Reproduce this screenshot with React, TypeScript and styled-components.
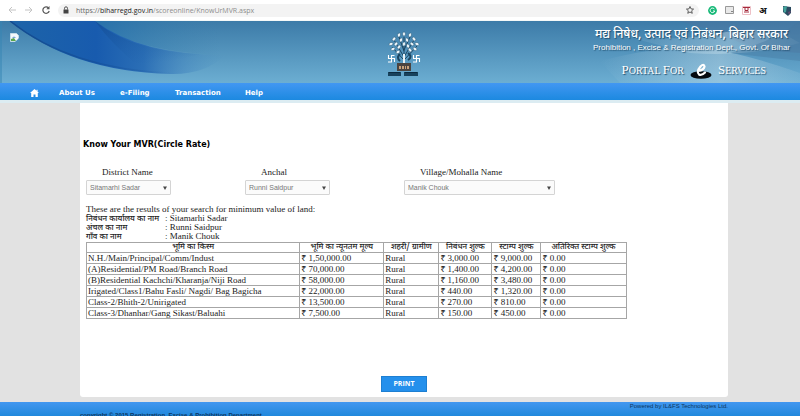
import React from "react";
import styled, { createGlobalStyle } from "styled-components";

const sans = `"Liberation Sans", Arial, sans-serif`;
const serif = `"Liberation Serif", "Noto Sans Devanagari", "Noto Sans", serif`;
const verdana = `"DejaVu Sans", Verdana, sans-serif`;
const hindi = `"Noto Sans Devanagari", "Noto Sans", sans-serif`;

const GlobalStyle = createGlobalStyle`
  * { box-sizing: border-box; }
  body { margin: 0; background: #fff; font-family: ${serif}; font-size: 9px; color: #222; }
`;

const Page = styled.div`
  display: flex;
  flex-direction: column;
  min-height: 100vh;
  padding-bottom: 4px;
`;

/* Browser toolbar */
const Toolbar = styled.div`
  display: flex;
  align-items: center;
  height: 21px;
  padding: 0 8px;
  border-bottom: 1px solid #f4f8f8;
  background: #fff;
`;

const NavIcons = styled.div`
  display: flex;
  gap: 9px;
  width: 50px;
`;

const AddressBar = styled.div`
  display: flex;
  align-items: center;
  flex: 1;
  height: 13px;
  padding: 0 5px;
  border-radius: 7px;
  background: #f3f3f3;
`;

const Url = styled.span`
  flex: 1;
  margin-left: 7px;
  padding-top: 2px;
  font: 7px/12px "Open Sans", sans-serif;
  color: #8d8d8d;
  white-space: nowrap;
  b { font-weight: 400; color: #222; }
  i { font-style: normal; color: #666; }
`;

const Extensions = styled.div`
  display: flex;
  align-items: center;
  gap: 8px;
  margin-left: 9px;
`;

const Letter = styled.span`
  width: 15px;
  padding-top: 4px;
  font: 700 9px/14px ${hindi};
  color: #111;
`;

/* Site banner */
const Banner = styled.header`
  position: relative;
  display: flex;
  justify-content: space-between;
  height: 62px;
  padding: 6px 10px 0 10px;
  background: linear-gradient(#3c7ba8, #6caed2);
  overflow: hidden;
`;

const Art = styled.svg<{ $side: "left" | "right" }>`
  position: absolute;
  top: 0;
  ${(p) => p.$side}: 0;
`;

const BannerSide = styled.div`
  position: relative;
  flex: 1 1 0;
  min-width: 0;
  padding-top: 6px;
`;

const BannerCentre = styled.div`
  position: relative;
  padding: 4px 0 0 7px;
`;

const Titles = styled(BannerSide)`
  display: flex;
  flex-direction: column;
  align-items: flex-end;
  padding-top: 0;
  color: #fff;
  white-space: nowrap;
  text-shadow: 1px 1px 1px #23506f;
`;

const HindiTitle = styled.div`
  font: 500 12px/16px ${hindi};
  padding-right: 2px;
`;

const EnglishTitle = styled.div`
  font: 8px/9px ${sans};
`;

const Portal = styled.div`
  display: flex;
  align-items: center;
  gap: 5px;
  margin-top: 7px;
  padding-right: 24px;
  font: 10px/22px "Liberation Serif", serif;
  b { font-size: 13px; font-weight: 400; }
`;

/* Menu */
const Menu = styled.nav`
  display: flex;
  align-items: center;
  height: 17px;
  padding: 2px 0 0 30px;
  background: linear-gradient(#4297f2, #1c89e0);
`;

const MenuLink = styled.a<{ $width: number }>`
  width: ${(p) => p.$width}px;
  font: 700 7px/12px ${verdana};
  color: #fff;
  text-decoration: none;
  svg { display: block; }
`;

/* Body */
const Body = styled.main`
  flex: 1;
  padding: 0 9% 5px 10%;
  border-top: 3px solid #dcecf2;
  background: #e2e2e2;
`;

const Panel = styled.section`
  min-height: 294px;
  padding: 34px 6px 0 6px;
  background: #fff;
  border-radius: 0 0 3px 3px;
`;

const Heading = styled.h1`
  margin: 0 0 14px -3px;
  font: 700 8px/16px ${verdana};
  color: #000;
`;

const Filters = styled.form`
  display: grid;
  grid-template-columns: 159px 159px 151px;
`;

const FilterLabel = styled.label`
  display: block;
  padding-left: 16px;
  line-height: 10px;
`;

const SelectBox = styled.div<{ $wide?: boolean }>`
  position: relative;
  width: ${(p) => (p.$wide ? 151 : 85)}px;
  margin-top: 3px;
  svg { position: absolute; right: 4px; top: 6px; pointer-events: none; }
`;

const Select = styled.select`
  display: block;
  appearance: none;
  width: 100%;
  height: 15px;
  padding: 0 3px;
  border: 1px solid #d4d4d4;
  border-radius: 1px;
  background: #fbfbfb;
  font: 7px/12px ${sans};
  color: #777;
`;

const Intro = styled.p`
  margin: 9px 0 0;
  line-height: 10px;
`;

const Details = styled.dl`
  display: grid;
  grid-template-columns: 79px auto;
  grid-auto-rows: 9px;
  margin: 0 0 1px;
  line-height: 9px;
  dt { font: 500 8px/11px ${hindi}; white-space: nowrap; }
  dd { margin: 0; }
`;

const RateTable = styled.table`
  width: 85%;
  table-layout: fixed;
  border-collapse: collapse;
  line-height: 10px;
  white-space: nowrap;
  th, td { height: 11px; padding: 0 0 0 1px; border: 1px solid #a6a6a6; text-align: left; }
  th { height: 10px; padding: 0; font: 500 8px/9px ${hindi}; text-align: center; }
`;

const Actions = styled.div`
  display: flex;
  justify-content: center;
  margin-top: 57px;
`;

const PrintButton = styled.button`
  width: 46px;
  height: 16px;
  padding: 0;
  border: 1px solid #1d7fd2;
  background: #2490ec;
  color: #fff;
  font: 700 7px/14px "Open Sans", sans-serif;
`;

const Footer = styled.footer`
  display: flex;
  justify-content: space-between;
  height: 14px;
  padding: 0 9% 0 10%;
  overflow: hidden;
  background: linear-gradient(#4297f0, #2088dc);
  font: 6px/8px ${sans};
  color: #0c3560;
`;

const Copyright = styled.strong`
  padding-top: 9px;
  white-space: nowrap;
`;

const rows = [
  ["N.H./Main/Principal/Comm/Indust", "1,50,000.00", "3,000.00", "9,000.00"],
  ["(A)Residential/PM Road/Branch Road", "70,000.00", "1,400.00", "4,200.00"],
  ["(B)Residential Kachchi/Kharanja/Niji Road", "58,000.00", "1,160.00", "3,480.00"],
  ["Irigated/Class1/Bahu Fasli/ Nagdi/ Bag Bagicha", "22,000.00", "440.00", "1,320.00"],
  ["Class-2/Bhith-2/Unirigated", "13,500.00", "270.00", "810.00"],
  ["Class-3/Dhanhar/Gang Sikast/Baluahi", "7,500.00", "150.00", "450.00"],
];

const columns: [string, number][] = [
  ["भूमि का किस्म", 213],
  ["भूमि का न्यूनतम मूल्य", 84],
  ["शहरी/ ग्रामीण", 55],
  ["निबंधन शुल्क", 53],
  ["स्टाम्प शुल्क", 49],
  ["अतिरिक्त स्टाम्प शुल्क", 85],
];
const columnTotal = columns.reduce((sum, c) => sum + c[1], 0);

const Col = styled.col<{ $share: number }>`
  width: ${(p) => p.$share}%;
`;

function Emblem() {
  const leaves = [
    [8, 8, 40], [13, 4, 20], [18, 3, 0], [24, 4, 20], [28, 8, -40], [5, 13, 70], [10, 13, 40], [15, 9, 20],
    [21, 9, -20], [26, 13, -50], [31, 13, -70], [7, 18, 70], [13, 16, 40], [22, 15, -20], [29, 18, -60], [18, 13, 10], [24, 19, -40], [12, 21, 60],
  ];
  return (
    <svg width="36" height="48" viewBox="0 0 36 48" role="img" aria-label="Government of Bihar emblem">
      <g fill="none" stroke="#1c4560" strokeWidth="1">
        <path d="M18 32V6M18 26L8 9M18 26L28 9M17 28L6 16M19 28L31 15M18 20L13 6M18 19L24 6" />
        <path d="M14 23q-4 4 0 7M22 22q5 4 0 7" strokeWidth="2" />
      </g>
      <path d="M17 33V23h2v10z" fill="#e8f2f6" />
      {leaves.map(([x, y, r], i) => (
        <ellipse key={i} cx={x} cy={y} rx="1.4" ry="2.1" fill="#f4fbff" stroke="#2c5b78" strokeWidth=".5" transform={`rotate(${r} ${x} ${y})`} />
      ))}
      <g fill="none" stroke="#fff" strokeWidth="1.1">
        <path d="M2.500 24v3.500h6V31M8.500 24.500h-3V31h-3.500" />
        <path d="M27.500 24v3.500h6V31M33.500 24.500h-3V31H27" />
      </g>
      <path d="M11 32h14v8H11z" fill="#4b4440" />
      <path d="M13 35h2v3h-2zM16 35h2v3h-2zM19 35h1v3h-1zM21 35h2v3h-2z" fill="#c9a27c" />
      <path d="M2 41h13v4H2zM18 41h14v4H18z" fill="#17415c" />
      <path d="M3 41.500h11M19 41.500h12" stroke="#0b2a40" />
    </svg>
  );
}

function Filter({ id, label, value, wide }: { id: string; label: string; value: string; wide?: boolean }) {
  return (
    <div>
      <FilterLabel htmlFor={id}>{label}</FilterLabel>
      <SelectBox $wide={wide}>
        <Select id={id} defaultValue={value}>
          <option>{value}</option>
        </Select>
        <svg width="4" height="4" viewBox="0 0 4 4"><path d="M0 .5h4L2 4z" fill="#444" /></svg>
      </SelectBox>
    </div>
  );
}

export default function App() {
  return (
    <Page>
      <GlobalStyle />
      <Toolbar>
        <NavIcons>
          <svg width="8" height="8" viewBox="0 0 8 8" fill="none" stroke="#c4c4c4"><path d="M8 4H1M4 1L1 4l3 3" /></svg>
          <svg width="8" height="8" viewBox="0 0 8 8" fill="none" stroke="#c4c4c4"><path d="M0 4h7M4 1l3 3-3 3" /></svg>
          <svg width="8" height="8" viewBox="0 0 8 8" fill="none" stroke="#555" strokeWidth="1.2"><path d="M6.500 2A3.200 3.200 0 1 0 7.200 5" /><path d="M7.500 0v3.200H4.300z" fill="#555" stroke="none" /></svg>
        </NavIcons>
        <AddressBar>
          <svg width="6" height="8" viewBox="0 0 6 8"><path d="M.5 3.500h5V7.500h-5z" fill="#444" /><path d="M1.500 3.500V2.300a1.500 1.500 0 0 1 3 0v1.200" fill="none" stroke="#444" strokeWidth=".9" /></svg>
          <Url><i>https://</i><b>biharregd.gov.in</b>/scoreonline/KnowUrMVR.aspx</Url>
          <svg width="8" height="8" viewBox="0 0 16 16" fill="none" stroke="#444" strokeWidth="1.700"><path d="M8 1l2.100 4.800 5 .4-3.800 3.400 1.200 5L8 12l-4.500 2.600 1.200-5L.9 6.200l5-.4z" /></svg>
        </AddressBar>
        <Extensions>
          <svg width="9" height="9" viewBox="0 0 9 9"><circle cx="4.500" cy="4.500" r="4.400" fill="#17b978" /><path d="M6.500 3.200A2.300 2.300 0 1 0 6.700 5H5" fill="none" stroke="#fff" /></svg>
          <svg width="9" height="8" viewBox="0 0 9 8"><path d="M.5.500h8v7h-8z" fill="#e9e9e9" stroke="#999" /><path d="M6 5.500h2" stroke="#888" /></svg>
          <svg width="9" height="9" viewBox="0 0 9 9"><path d="M.5.500h8v8h-8z" fill="#fff" stroke="#edc0c6" /><path d="M1 1.500h7M3 2v2.500h3V2M2 6h5" fill="none" stroke="#a52a3c" /></svg>
          <Letter>अ</Letter>
          <svg width="10" height="11" viewBox="0 0 10 11"><path d="M1 1l8 1v6L6 11 1 7z" fill="#2b4a60" /><path d="M1 2l4-1-1 6-2 1z" fill="#43a29a" /><path d="M6 7l3-1-2 4z" fill="#6b4a72" /></svg>
        </Extensions>
      </Toolbar>

      <Banner>
        <Art $side="left" width="300" height="62" viewBox="0 0 300 62">
          <defs>
            <linearGradient id="band" x1="0" x2="1">
              <stop offset="0" stopColor="#1d64a8" />
              <stop offset=".4" stopColor="#185bae" />
              <stop offset=".62" stopColor="#2569b4" stopOpacity=".9" />
              <stop offset=".82" stopColor="#3a7dbc" stopOpacity=".4" />
              <stop offset="1" stopColor="#4a8fc0" stopOpacity="0" />
            </linearGradient>
            <linearGradient id="glow" x1="0" x2="1">
              <stop offset="0" stopColor="#1f6dab" stopOpacity=".7" />
              <stop offset="1" stopColor="#3a7fae" stopOpacity="0" />
            </linearGradient>
            <linearGradient id="edge" x1="0" x2="1">
              <stop offset="0" stopColor="#124a90" />
              <stop offset="1" stopColor="#124a90" stopOpacity="0" />
            </linearGradient>
            <linearGradient id="shade" x1="0" y1="0" x2=".3" y2="1">
              <stop offset="0" stopColor="#124a90" stopOpacity=".8" />
              <stop offset="1" stopColor="#1d5faa" stopOpacity="0" />
            </linearGradient>
          </defs>
          <path d="M95 0Q130 30 220 34L220 0z" fill="url(#glow)" />
          <path d="M10 0Q70 50 170 53Q205 54 225 34Q140 34 95 0z" fill="url(#band)" />
          <path d="M95 0Q130 30 200 33Q160 44 140 46Q112 24 95 0z" fill="url(#shade)" opacity=".8" />
          <path d="M10 0Q70 48 170 52" fill="none" stroke="url(#edge)" strokeWidth="1.500" />
          <path d="M0 0h2v62H0z" fill="#3585b4" opacity=".5" />
        </Art>
        <Art $side="right" width="240" height="62" viewBox="0 0 240 62">
          <defs>
            <linearGradient id="mist" x1="0" x2="1">
              <stop offset="0" stopColor="#cfe4ee" stopOpacity="0" />
              <stop offset=".6" stopColor="#cfe4ee" stopOpacity=".4" />
              <stop offset="1" stopColor="#cfe4ee" stopOpacity=".1" />
            </linearGradient>
          </defs>
          <path d="M120 0h120v32Q190 30 160 12z" fill="#52749a" opacity=".35" />
          <path d="M40 40Q110 22 150 28T240 52V62H60z" fill="url(#mist)" />
          <path d="M60 14Q110 22 160 12T240 22Q190 36 130 32z" fill="url(#mist)" />
          <path d="M170 32Q210 22 240 0V40z" fill="#47799f" opacity=".4" />
        </Art>
        <BannerSide>
          <svg width="9" height="9" viewBox="0 0 9 9" role="img" aria-label="Logo"><path d="M.5.500h6l2 2v6h-8z" fill="#f4f9fc" stroke="#c6dbe8" /><path d="M2 5q2-3 4 0z" fill="#7ca7d8" /><path d="M1 8V6l3-1 2 3z" fill="#59a54e" /><path d="M9 5L5 9h4z" fill="#4a8fbc" /></svg>
        </BannerSide>
        <BannerCentre><Emblem /></BannerCentre>
        <Titles>
          <HindiTitle>मद्य निषेध, उत्पाद एवं निबंधन, बिहार सरकार</HindiTitle>
          <EnglishTitle>Prohibition , Excise &amp; Registration Dept., Govt. Of Bihar</EnglishTitle>
          <Portal>
            <span><b>P</b>ORTAL <b>F</b>OR</span>
            <svg width="24" height="18" viewBox="0 0 24 18" role="img" aria-label="e">
              <ellipse cx="12" cy="13" rx="10.500" ry="3.800" fill="#050a10" />
              <path d="M9 9Q15 8 15.500 4.500Q15 1 11.500 4.500Q7 10 10 12.500Q12.500 14 16 10.500" fill="none" stroke="#fff" strokeWidth="2.200" strokeLinecap="round" />
            </svg>
            <span><b>S</b>ERVICES</span>
          </Portal>
        </Titles>
      </Banner>

      <Menu>
        <MenuLink href="#home" aria-label="Home" $width={29}>
          <svg width="9" height="8" viewBox="0 0 9 8"><path d="M4.500 0L0 4h1.200v4h2.300V5.500h2V8h2.300V4H9L7.600 2.700V.8h-1v1z" fill="#fff" /></svg>
        </MenuLink>
        <MenuLink href="#about" $width={61}>About Us</MenuLink>
        <MenuLink href="#filing" $width={55}>e-Filing</MenuLink>
        <MenuLink href="#transaction" $width={70}>Transaction</MenuLink>
        <MenuLink href="#help" $width={30}>Help</MenuLink>
      </Menu>

      <Body>
        <Panel>
          <Heading>Know Your MVR(Circle Rate)</Heading>
          <Filters>
            <Filter id="district" label="District Name" value="Sitamarhi Sadar" />
            <Filter id="anchal" label="Anchal" value="Runni Saidpur" />
            <Filter id="village" label="Village/Mohalla Name" value="Manik Chouk" wide />
          </Filters>
          <Intro>These are the results of your search for minimum value of land:</Intro>
          <Details>
            <dt>निबंधन कार्यालय का नाम</dt><dd>: Sitamarhi Sadar</dd>
            <dt>अंचल का नाम</dt><dd>: Runni Saidpur</dd>
            <dt>गाँव का नाम</dt><dd>: Manik Chouk</dd>
          </Details>
          <RateTable>
            <colgroup>
              {columns.map(([name, w]) => <Col key={name} $share={(w / columnTotal) * 100} />)}
            </colgroup>
            <thead>
              <tr>{columns.map(([name]) => <th key={name} scope="col">{name}</th>)}</tr>
            </thead>
            <tbody>
              {rows.map(([kind, value, registration, stamp]) => (
                <tr key={kind}>
                  <td>{kind}</td>
                  <td>₹ {value}</td>
                  <td>Rural</td>
                  <td>₹ {registration}</td>
                  <td>₹ {stamp}</td>
                  <td>₹ 0.00</td>
                </tr>
              ))}
            </tbody>
          </RateTable>
          <Actions><PrintButton type="button">PRINT</PrintButton></Actions>
        </Panel>
      </Body>

      <Footer>
        <Copyright>copyright © 2015 Registration, Excise &amp; Prohibition Department</Copyright>
        <span>Powered by IL&amp;FS Technologies Ltd.</span>
      </Footer>
    </Page>
  );
}
